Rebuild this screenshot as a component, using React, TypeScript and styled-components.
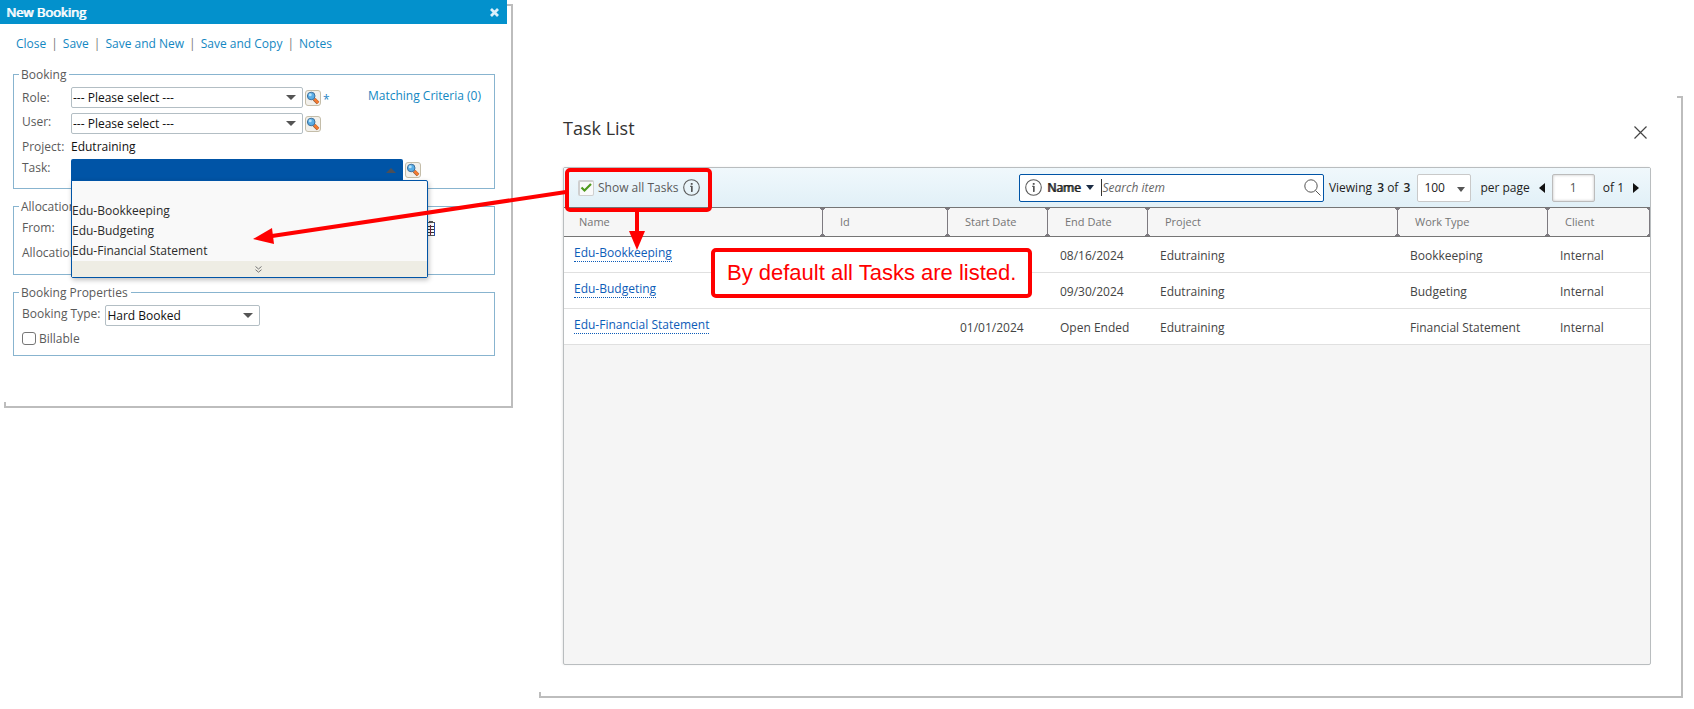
import React from "react";
import styled, { createGlobalStyle } from "styled-components";

const GlobalStyle = createGlobalStyle`
  *, *::before, *::after { box-sizing: border-box; }
  body {
    margin: 0;
    background: #fff;
    color: #5a5a5a;
    font: 12px/17px "Open Sans", "Noto Sans", sans-serif;
  }
  button, input, select { font: inherit; color: inherit; margin: 0; }
`;

const Page = styled.main`
  position: relative;
  display: flex;
  align-items: flex-start;
  gap: 28px;
  min-height: 100vh;
  padding-right: 17px;
  padding-bottom: 17px;
`;

const Panel = styled.section`
  background: #fff;
  box-shadow: 5px 5px 0 -1px #fff, 5px 5px 0 1px #bdbdbd;
`;

/* ---------- booking dialog ---------- */

const BookingPanel = styled(Panel)`
  flex: 0 0 507px;
  padding-bottom: 37px;
`;

const TitleBar = styled.header`
  display: flex;
  align-items: center;
  justify-content: space-between;
  height: 24px;
  padding: 0 8px 0 6px;
  background: #0391cc;
`;

const DialogTitle = styled.h1`
  margin: 0;
  color: #fff;
  font-size: 13px;
  line-height: 24px;
  font-weight: 400;
  text-shadow: 1px 0 0 #fff;
`;

const PlainButton = styled.button`
  display: flex;
  align-items: center;
  justify-content: center;
  padding: 0;
  border: 0;
  background: none;
  cursor: pointer;
`;

const Actions = styled.nav`
  display: flex;
  align-items: center;
  height: 42px;
  padding: 0 16px 4px;
`;

const ActionLink = styled.a`
  color: #1387c2;
  text-decoration: none;

  & + &::before {
    content: "|";
    margin: 0 5px;
    color: #777;
  }
`;

const Group = styled.fieldset<{ $height: number }>`
  display: block;
  min-width: 0;
  min-height: ${(p) => p.$height}px;
  margin: 0 12px 9px 13px;
  padding: 4px 13px 7px 8px;
  border: 1px solid #88b4cf;
`;

const GroupName = styled.legend`
  margin-left: -3px;
  padding: 0 3px 0 2px;
  line-height: 17px;
`;

const Field = styled.div<{ $gap?: number }>`
  display: flex;
  align-items: center;
  margin-bottom: ${(p) => p.$gap ?? 5}px;
`;

const FieldLabel = styled.label<{ $raised?: boolean; $auto?: boolean }>`
  flex: none;
  width: ${(p) => (p.$auto ? "auto" : "49px")};
  padding-right: ${(p) => (p.$auto ? 5 : 0)}px;
  align-self: ${(p) => (p.$raised ? "flex-start" : "center")};
  white-space: nowrap;
`;

const Picker = styled.span<{ $width: number }>`
  position: relative;
  flex: none;
  width: ${(p) => p.$width}px;

  select {
    display: block;
    width: 100%;
    height: 21px;
    padding: 0 20px 0 1px;
    appearance: none;
    border: 1px solid #b3bec4;
    border-radius: 2px;
    background: #fff;
    color: #111;
  }

  svg {
    position: absolute;
    right: 7px;
    top: 8px;
    pointer-events: none;
  }
`;

const LookupButton = styled.button`
  display: flex;
  flex: none;
  width: 16px;
  height: 16px;
  margin-left: 2px;
  padding: 0;
  border: 1px solid #c4bda9;
  border-radius: 3px;
  background: #f2f0eb;
  cursor: pointer;
`;

const Required = styled.span`
  margin-left: 2px;
  padding-top: 4px;
  line-height: 16px;
  color: #2a86c4;
`;

const CriteriaLink = styled.a`
  margin-left: auto;
  padding-bottom: 4px;
  color: #1387c2;
  text-decoration: none;
`;

const FieldText = styled.span`
  color: #111;
`;

const Combo = styled.div`
  position: relative;
  flex: none;
  width: 332px;
`;

const ComboToggle = styled.button`
  display: flex;
  align-items: center;
  justify-content: flex-end;
  width: 100%;
  height: 22px;
  padding: 0 7px;
  border: 0;
  border-radius: 2px 2px 0 0;
  background: #0054a6;
`;

const ComboMenu = styled.div`
  position: absolute;
  z-index: 2;
  top: 21px;
  left: 0;
  width: 357px;
  border: 1px solid #0054a6;
  border-radius: 0 2px 2px 2px;
  background: #f9f9f9;
  box-shadow: 1px 2px 5px rgba(0, 0, 0, 0.25);
`;

const Options = styled.ul`
  margin: 0;
  padding: 0;
  list-style: none;
`;

const Option = styled.li`
  height: 20px;
  line-height: 20px;
  color: #2b2b2b;
`;

const MoreButton = styled(PlainButton)`
  width: 100%;
  padding-left: 18px;
  height: 16px;
  background: #eeede4;
`;

const DateInput = styled.input`
  width: 346px;
  height: 18px;
  border: 1px solid #b3bec4;
`;

const CheckField = styled.label`
  display: flex;
  align-items: center;
  gap: 3px;

  input {
    width: 14px;
    height: 13px;
    appearance: none;
    border: 1px solid #767676;
    border-radius: 3px;
    background: #fff;
  }
`;

/* ---------- task list ---------- */

const TaskPanel = styled(Panel)`
  display: flex;
  flex: 1;
  flex-direction: column;
  align-self: stretch;
  min-width: 0;
  margin-top: 92px;
  padding: 0 26px 27px 28px;
`;

const TaskHeader = styled.header`
  display: flex;
  align-items: center;
  justify-content: space-between;
  height: 75px;
  padding-right: 4px;

  button { padding-top: 5px; }
`;

const TaskTitle = styled.h2`
  margin: 0;
  padding-bottom: 3px;
  color: #333;
  font-size: 18px;
  line-height: 24px;
  font-weight: 400;
`;

const Grid = styled.div`
  flex: 1;
  border: 1px solid #b9bdbf;
  border-radius: 2px;
  background: #f5f5f5;
  box-shadow: -1px 0 2px rgba(0, 0, 0, 0.08);
`;

const GridToolbar = styled.div`
  display: flex;
  align-items: center;
  height: 39px;
  padding: 0 11px 0 14px;
  background: linear-gradient(#f0f8fc, #e1f0f7);
  color: #222;
  white-space: nowrap;
`;

const ShowAll = styled.label`
  position: relative;
  display: flex;
  align-items: center;
  gap: 4px;
  margin-right: 5px;
  color: #5a5a5a;

  input {
    width: 16px;
    height: 16px;
    appearance: none;
    border: 2px solid #cfcfcf;
    border-right-width: 1px;
    border-bottom-width: 1px;
    border-radius: 2px;
    background: #fafafa;
  }

  svg {
    position: absolute;
    left: 2px;
    top: 3px;
    pointer-events: none;
  }
`;

const SearchBox = styled.div`
  display: flex;
  align-items: center;
  width: 305px;
  height: 28px;
  margin-left: auto;
  padding: 0 2px 0 5px;
  border: 1px solid #0054a6;
  border-radius: 2px;
  background: #fff;
`;

const SearchField = styled(PlainButton)`
  gap: 6px;
  margin: 0 7px 0 5px;
  color: #222;
  text-shadow: 1px 0 0 #222;
`;

const SearchInput = styled.input`
  flex: 1;
  min-width: 0;
  height: 17px;
  padding: 0;
  border: 0;
  border-left: 1px solid #333;
  outline: 0;
  background: none;

  &::placeholder { color: #666; font-style: italic; opacity: 1; }
`;

const Viewing = styled.span`
  margin: 0 7px 0 5px;

  b {
    margin-left: 2px;
    font-weight: 600;
  }
`;

const PageSize = styled.span`
  position: relative;
  width: 54px;
  margin-right: 9px;

  select {
    display: block;
    width: 100%;
    height: 28px;
    padding: 0 0 0 6px;
    appearance: none;
    border: 1px solid #c9c9c9;
    border-radius: 2px;
    background: #fff;
  }

  svg {
    position: absolute;
    right: 6px;
    top: 13px;
    pointer-events: none;
  }
`;

const PageInput = styled.input`
  width: 43px;
  height: 28px;
  border: 1px solid #bcbcbc;
  border-radius: 2px;
  background: #fff;
  box-shadow: inset 0 0 3px rgba(0, 0, 0, 0.25);
  color: #555;
  text-align: center;
`;

const PageStep = styled(PlainButton)<{ $before: number; $after: number }>`
  margin: 0 ${(p) => p.$after}px 0 ${(p) => p.$before}px;
`;

const Table = styled.table`
  width: 100%;
  table-layout: fixed;
  border-collapse: separate;
  border-spacing: 0;
  background: #fff;
`;

const HeadCell = styled.th`
  position: relative;
  height: 30px;
  padding: 0 0 1px 17px;
  border-top: 1px solid #757575;
  border-bottom: 1px solid #757575;
  background: #f6f6f6;
  color: #757575;
  font-size: 11px;
  font-weight: 400;
  text-align: left;

  &:first-child { padding-left: 15px; }

  svg {
    position: absolute;
    z-index: 1;
    top: 0;
    right: -2px;
  }

  &:last-child { overflow: hidden; }
`;

const Cell = styled.td`
  height: 36px;
  padding: 1px 0 0 12px;
  border-bottom: 1px solid #e0e0e0;
  color: #444;
  white-space: nowrap;

  &:first-child { padding: 0 0 4px 10px; }
`;

const TaskLink = styled.a`
  display: inline-block;
  line-height: 17px;
  border-bottom: 1px dotted #0d5cb8;
  color: #0d5cb8;
  text-decoration: none;
`;

/* ---------- annotations ---------- */

const Arrows = styled.svg`
  position: absolute;
  z-index: 3;
  top: 0;
  left: 0;
  pointer-events: none;
`;

const Callout = styled.p`
  position: absolute;
  z-index: 3;
  top: 248px;
  left: 711px;
  margin: 0;
  padding: 0 12px;
  border: 4px solid #f00;
  border-radius: 5px;
  background: #fff;
  color: #f00;
  font: 22px/42px "Liberation Sans", Arial, sans-serif;
  white-space: nowrap;
`;

/* ---------- icons ---------- */

const Triangle = ({ width = 10, color = "#555", up = false }: { width?: number; color?: string; up?: boolean }) => (
  <svg width={width} height="5" viewBox="0 0 10 5" preserveAspectRatio="none" aria-hidden="true">
    <path d={up ? "M0 5 5 0 10 5Z" : "M0 0h10L5 5Z"} fill={color} />
  </svg>
);

const SideTriangle = ({ left = false }: { left?: boolean }) => (
  <svg width="6" height="10" viewBox="0 0 6 10" aria-hidden="true">
    <path d={left ? "M6 0v10L0 5Z" : "M0 0v10L6 5Z"} fill="#111" />
  </svg>
);

const InfoIcon = () => (
  <svg width="17" height="17" viewBox="0 0 17 17" fill="none" aria-hidden="true">
    <circle cx="8.5" cy="8.5" r="7.8" stroke="#5c5c5c" strokeWidth="1.1" />
    <path d="M7.2 7.4h1.4v5.4" stroke="#555" strokeWidth="1.2" />
    <rect x="8" y="7" width="1.6" height="5.8" fill="#555" />
    <rect x="7.8" y="4" width="1.8" height="1.8" fill="#555" />
  </svg>
);

const LookupIcon = () => (
  <svg width="14" height="14" viewBox="0 0 14 14" aria-hidden="true">
    <path d="m8 8 4 4" stroke="#8c5a3c" strokeWidth="3.6" />
    <path d="m8.4 8 3.8 4" stroke="#f47a30" strokeWidth="2.6" />
    <circle cx="5.2" cy="5" r="3.8" fill="#5aaee6" stroke="#3c6f9c" />
    <circle cx="4.2" cy="3.8" r="1.5" fill="#b9e3fb" />
  </svg>
);

const ColumnGrip = () => (
  <svg width="5" height="28" viewBox="0 0 5 28" aria-hidden="true">
    <path d="M0 0h5v1H4v1H3v24h1v1h1v1H0v-1h1v-1h1V2H1V1H0Z" fill="#7d7a80" />
  </svg>
);

/* ---------- data ---------- */

const actions = ["Close", "Save", "Save and New", "Save and Copy", "Notes"];

const columns: { name: string; width?: number }[] = [
  { name: "Name" },
  { name: "Id", width: 125 },
  { name: "Start Date", width: 100 },
  { name: "End Date", width: 100 },
  { name: "Project", width: 250 },
  { name: "Work Type", width: 150 },
  { name: "Client", width: 102 },
];

const tasks = [
  { name: "Edu-Bookkeeping", id: "", start: "", end: "08/16/2024", project: "Edutraining", work: "Bookkeeping", client: "Internal" },
  { name: "Edu-Budgeting", id: "", start: "", end: "09/30/2024", project: "Edutraining", work: "Budgeting", client: "Internal" },
  { name: "Edu-Financial Statement", id: "", start: "01/01/2024", end: "Open Ended", project: "Edutraining", work: "Financial Statement", client: "Internal" },
];

const Lookup = ({ label }: { label: string }) => (
  <LookupButton type="button" aria-label={label}>
    <LookupIcon />
  </LookupButton>
);

const BookingDialog = () => (
  <BookingPanel aria-label="New Booking">
    <TitleBar>
      <DialogTitle>New Booking</DialogTitle>
      <PlainButton type="button" aria-label="Close">
        <svg width="9" height="9" viewBox="0 0 9 9" aria-hidden="true">
          <path d="m1 1 7 7M8 1 1 8" stroke="#dceffa" strokeWidth="2.8" />
        </svg>
      </PlainButton>
    </TitleBar>
    <Actions>
      {actions.map((a) => (
        <ActionLink href="#" key={a}>{a}</ActionLink>
      ))}
    </Actions>

    <Group $height={123}>
      <GroupName>Booking</GroupName>
      <Field>
        <FieldLabel htmlFor="role">Role:</FieldLabel>
        <Picker $width={232}>
          <select id="role"><option>--- Please select ---</option></select>
          <Triangle />
        </Picker>
        <Lookup label="Find role" />
        <Required>*</Required>
        <CriteriaLink href="#">Matching Criteria (0)</CriteriaLink>
      </Field>
      <Field $gap={4}>
        <FieldLabel htmlFor="user" $raised>User:</FieldLabel>
        <Picker $width={232}>
          <select id="user"><option>--- Please select ---</option></select>
          <Triangle />
        </Picker>
        <Lookup label="Find user" />
      </Field>
      <Field $gap={4}>
        <FieldLabel as="span">Project:</FieldLabel>
        <FieldText>Edutraining</FieldText>
      </Field>
      <Field $gap={0}>
        <FieldLabel htmlFor="task" $raised>Task:</FieldLabel>
        <Combo>
          <ComboToggle id="task" type="button" aria-haspopup="listbox" aria-expanded="true">
            <Triangle up color="#4c4f57" />
          </ComboToggle>
          <ComboMenu>
            <Options role="listbox" aria-label="Task">
              <Option role="option" aria-label="None" />
              {tasks.map((t) => (
                <Option role="option" key={t.name}>{t.name}</Option>
              ))}
            </Options>
            <MoreButton type="button" aria-label="More tasks">
              <svg width="7" height="7" viewBox="0 0 7 7" fill="none" aria-hidden="true">
                <path d="m.5.5 3 2.5 3-2.5M.5 3.7l3 2.5 3-2.5" stroke="#777" />
              </svg>
            </MoreButton>
          </ComboMenu>
        </Combo>
        <Lookup label="Find task" />
      </Field>
    </Group>

    <Group $height={77}>
      <GroupName>Allocation</GroupName>
      <Field $gap={7}>
        <FieldLabel htmlFor="from" $raised>From:</FieldLabel>
        <DateInput id="from" type="text" />
        <PlainButton type="button" aria-label="Pick a date">
          <svg width="18" height="16" viewBox="0 0 18 16" aria-hidden="true">
            <rect x="3.5" y="2.5" width="14" height="13" fill="#fff" stroke="#555" />
            <path d="M17.5 3v13" stroke="#2450b4" />
            <path d="M12 1h4v2h-4z" fill="#555" />
            <path d="M4 6.5h13M4 9.5h13M4 12.5h13" stroke="#333" />
            <path d="M13.5 5v10" stroke="#7a2540" />
          </svg>
        </PlainButton>
      </Field>
      <Field $gap={0}>
        <FieldLabel as="span">Allocation</FieldLabel>
      </Field>
    </Group>

    <Group $height={72}>
      <GroupName>Booking Properties</GroupName>
      <Field $gap={4}>
        <FieldLabel htmlFor="type" $auto $raised>Booking Type:</FieldLabel>
        <Picker $width={155}>
          <select id="type"><option>Hard Booked</option></select>
          <Triangle />
        </Picker>
      </Field>
      <CheckField>
        <input type="checkbox" />
        Billable
      </CheckField>
    </Group>
  </BookingPanel>
);

const TaskList = () => (
  <TaskPanel aria-label="Task List">
    <TaskHeader>
      <TaskTitle>Task List</TaskTitle>
      <PlainButton type="button" aria-label="Close">
        <svg width="13" height="13" viewBox="0 0 13 13" aria-hidden="true">
          <path d="m.5.5 12 12M12.5.5l-12 12" stroke="#444" strokeWidth="1.2" />
        </svg>
      </PlainButton>
    </TaskHeader>
    <Grid>
      <GridToolbar>
        <ShowAll>
          <input type="checkbox" defaultChecked />
          <svg width="13" height="11" viewBox="0 0 13 11" fill="none" aria-hidden="true">
            <path d="m1.5 5.5 3 3L11 2" stroke="#4f9a1e" strokeWidth="2.2" />
          </svg>
          Show all Tasks
        </ShowAll>
        <InfoIcon />
        <SearchBox>
          <InfoIcon />
          <SearchField type="button">
            Name
            <Triangle width={8} color="#1c2c44" />
          </SearchField>
          <SearchInput type="text" aria-label="Search item" placeholder="Search item" />
          <PlainButton type="button" aria-label="Search">
            <svg width="17" height="17" viewBox="0 0 17 17" fill="none" stroke="#555" aria-hidden="true">
              <circle cx="7" cy="7" r="6.2" />
              <path d="m11.5 11.5 5 5" />
            </svg>
          </PlainButton>
        </SearchBox>
        <Viewing>Viewing <b>3</b> of <b>3</b></Viewing>
        <PageSize>
          <select aria-label="Items per page"><option>100</option></select>
          <Triangle width={8} />
        </PageSize>
        per page
        <PageStep type="button" aria-label="Previous page" $before={9} $after={7}>
          <SideTriangle left />
        </PageStep>
        <PageInput type="text" aria-label="Page" defaultValue="1" />
        <PageStep as="span" $before={8} $after={0}>of 1</PageStep>
        <PageStep type="button" aria-label="Next page" $before={9} $after={0}>
          <SideTriangle />
        </PageStep>
      </GridToolbar>
      <Table>
        <colgroup>
          {columns.map((c) => (
            <col key={c.name} width={c.width} />
          ))}
        </colgroup>
        <thead>
          <tr>
            {columns.map((c) => (
              <HeadCell key={c.name} scope="col">
                {c.name}
                <ColumnGrip />
              </HeadCell>
            ))}
          </tr>
        </thead>
        <tbody>
          {tasks.map((t) => (
            <tr key={t.name}>
              <Cell><TaskLink href="#">{t.name}</TaskLink></Cell>
              <Cell>{t.id}</Cell>
              <Cell>{t.start}</Cell>
              <Cell>{t.end}</Cell>
              <Cell>{t.project}</Cell>
              <Cell>{t.work}</Cell>
              <Cell>{t.client}</Cell>
            </tr>
          ))}
        </tbody>
      </Table>
    </Grid>
  </TaskPanel>
);

export default function App() {
  return (
    <Page>
      <GlobalStyle />
      <BookingDialog />
      <TaskList />
      <Arrows width="720" height="260" viewBox="0 0 720 260" aria-hidden="true">
        <rect x="567" y="170" width="143" height="40" rx="3" fill="none" stroke="#f00" strokeWidth="4" />
        <path d="M566 192 272 236" stroke="#f00" strokeWidth="4" />
        <path d="m253 239 19-11 2 16Z" fill="#f00" />
        <path d="M637 211v22" stroke="#f00" strokeWidth="4" />
        <path d="M629 231h16l-8 19Z" fill="#f00" />
      </Arrows>
      <Callout>By default all Tasks are listed.</Callout>
    </Page>
  );
}
